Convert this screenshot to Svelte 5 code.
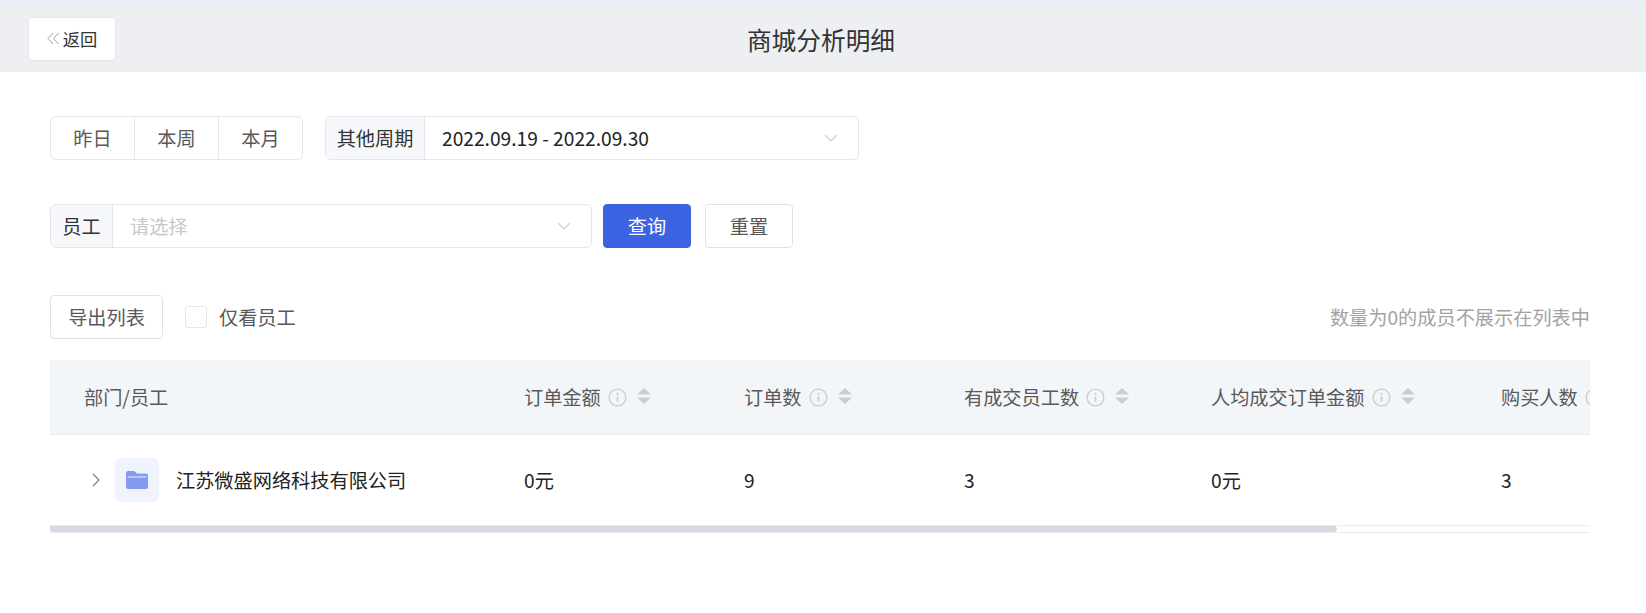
<script>
  const columns = [
    { label: '订单金额', value: '0元', width: 220 },
    { label: '订单数', value: '9', width: 220 },
    { label: '有成交员工数', value: '3', width: 247 },
    { label: '人均成交订单金额', value: '0元', width: 290 },
    { label: '购买人数', value: '3', width: 180 }
  ];
</script>

<div class="page">
  <header class="topbar">
    <button class="back">
      <svg class="back-icon" viewBox="0 0 13 13" width="13" height="13"><path d="M6 1 1 6.500l5 5.500M11.500 1l-5 5.500 5 5.500" fill="none" stroke="#a0a0a0" stroke-width="1"/></svg>
      <span>返回</span>
    </button>
    <h1>商城分析明细</h1>
  </header>

  <main class="content">
    <div class="row first">
      <div class="segments">
        <div class="seg">昨日</div>
        <div class="seg">本周</div>
        <div class="seg">本月</div>
      </div>
      <div class="field period">
        <div class="addon">其他周期</div>
        <div class="value">2022.09.19 - 2022.09.30</div>
        <svg class="chev" viewBox="0 0 14 8" width="14" height="8"><path d="M1 1l6 6 6-6" fill="none" stroke="#cfcfcf" stroke-width="1.2"/></svg>
      </div>
    </div>

    <div class="row second">
      <div class="field staff">
        <div class="addon small">员工</div>
        <div class="value placeholder">请选择</div>
        <svg class="chev" viewBox="0 0 14 8" width="14" height="8"><path d="M1 1l6 6 6-6" fill="none" stroke="#cfcfcf" stroke-width="1.2"/></svg>
      </div>
      <button class="btn primary">查询</button>
      <button class="btn reset">重置</button>
    </div>

    <div class="row third">
      <button class="btn export">导出列表</button>
      <label class="check"><span class="box"></span><span>仅看员工</span></label>
      <div class="note">数量为0的成员不展示在列表中</div>
    </div>

    <div class="table">
      <div class="inner">
        <div class="thead">
          <div class="first-col head-first">部门/员工</div>
          {#each columns as c}
            <div class="th" style="width:{c.width}px">
              <span>{c.label}</span>
              <svg class="info" viewBox="0 0 20 20" width="19" height="19"><circle cx="10" cy="10" r="8.8" fill="none" stroke="#cccccc" stroke-width="1.4"/><circle cx="10" cy="6.200" r="1.100" fill="#cccccc"/><path d="M10 9v5.500" stroke="#cccccc" stroke-width="1.700"/></svg>
              <svg class="sort" viewBox="0 0 14 16" width="14" height="16"><path d="M7 0l7 6.500H0zM7 16l7-6.500H0z" fill="#cdcdcd"/></svg>
            </div>
          {/each}
        </div>
        <div class="tbody">
          <div class="first-col body-first">
            <svg class="arrow" viewBox="0 0 8 14" width="8" height="14"><path d="M1 1l6 6-6 6" fill="none" stroke="#777" stroke-width="1.100"/></svg>
            <div class="tile">
              <svg viewBox="0 0 22 18" width="22" height="18"><path d="M2 0h6l3 2.500h9a2 2 0 0 1 2 2V16a2 2 0 0 1-2 2H2a2 2 0 0 1-2-2V2a2 2 0 0 1 2-2z" fill="#829bf0"/><path d="M1.500 6h19" stroke="#eef2fe" stroke-width="1"/></svg>
            </div>
            <span>江苏微盛网络科技有限公司</span>
          </div>
          {#each columns as c}
            <div class="td" style="width:{c.width}px">{c.value}</div>
          {/each}
        </div>
      </div>
      <div class="scroll"><div class="thumb"></div></div>
    </div>
  </main>
</div>

<style>
  :global(body) {
    margin: 0;
    background: #fff;
    overflow: hidden;
  }
  .page {
    height: 613px;
    font-family: "Noto Sans CJK SC", "Noto Sans", sans-serif;
    color: #595959;
    font-size: 19.2px;
  }
  .topbar {
    height: 67px;
    border-top: 5px solid #e9eef6;
    background: #edeff3;
    display: flex;
    align-items: center;
    position: relative;
    padding-left: 28px;
  }
  .topbar h1 {
    position: absolute;
    left: 0;
    right: 0;
    margin: 0;
    padding-right: 4px;
    text-align: center;
    font-size: 24.7px;
    font-weight: 400;
    color: #333;
  }
  button {
    font-family: inherit;
    cursor: pointer;
  }
  .back {
    position: relative;
    z-index: 1;
    width: 88px;
    height: 44px;
    background: #fff;
    border: 1px solid #e4e6ea;
    border-radius: 4px;
    display: flex;
    align-items: center;
    justify-content: center;
    gap: 3px;
    padding: 0;
    font-size: 17.300px;
    color: #333;
  }
  .content {
    padding: 44px 56px 0 50px;
  }
  .row {
    display: flex;
    align-items: center;
  }
  .first { height: 44px; gap: 22px; }
  .second { height: 44px; margin-top: 44px; }
  .third { height: 44px; margin-top: 47px; }
  .segments {
    display: flex;
    width: 253px;
    height: 44px;
    box-sizing: border-box;
    border: 1px solid #e4e6ea;
    border-radius: 6px;
  }
  .seg {
    flex: 1;
    display: flex;
    align-items: center;
    justify-content: center;
    color: #595959;
  }
  .seg + .seg { border-left: 1px solid #e4e6ea; }
  .field {
    height: 44px;
    box-sizing: border-box;
    border: 1px solid #e4e6ea;
    border-radius: 6px;
    display: flex;
    align-items: center;
    overflow: hidden;
  }
  .period { width: 534px; }
  .staff { width: 542px; }
  .addon {
    width: 98px;
    height: 100%;
    flex: none;
    background: #f6f8fc;
    border-right: 1px solid #e4e6ea;
    display: flex;
    align-items: center;
    justify-content: center;
    color: #333;
  }
  .addon.small { width: 61px; }
  .value {
    flex: 1;
    padding-left: 17px;
    color: #222;
  }
  .value.placeholder { color: #c8c8c8; }
  .chev { margin-right: 20px; }
  .btn {
    height: 44px;
    background: #fff;
    border: 1px solid #dfe1e6;
    border-radius: 4px;
    font-size: 19.2px;
    color: #595959;
    padding: 0;
  }
  .primary {
    width: 88px;
    margin-left: 11px;
    background: #3c63e2;
    border-color: #3c63e2;
    color: #fff;
  }
  .reset { width: 88px; margin-left: 14px; }
  .export { width: 113px; }
  .check {
    display: flex;
    align-items: center;
    gap: 12px;
    margin-left: 22px;
  }
  .box {
    width: 20px;
    height: 20px;
    border: 1px solid #e4e6ea;
    border-radius: 3px;
  }
  .note {
    margin-left: auto;
    color: #a3a3a3;
    white-space: nowrap;
  }
  .table {
    margin-top: 21px;
    overflow: hidden;
  }
  .inner { width: 1700px; }
  .thead {
    display: flex;
    align-items: center;
    height: 74px;
    background: #f3f6f9;
    border-bottom: 1px solid #e9ecf0;
  }
  .tbody {
    display: flex;
    align-items: center;
    height: 90px;
    color: #222;
  }
  .first-col {
    width: 474px;
    flex: none;
    box-sizing: border-box;
    display: flex;
    align-items: center;
  }
  .head-first { padding-left: 34px; }
  .body-first { padding-left: 42px; }
  .tile {
    width: 44px;
    height: 44px;
    margin-left: 15px;
    margin-right: 17px;
    border-radius: 6px;
    background: #eff3fe;
    display: flex;
    align-items: center;
    justify-content: center;
  }
  .th {
    flex: none;
    display: flex;
    align-items: center;
  }
  .info { margin-left: 7px; }
  .sort { margin-left: 10px; margin-top: -2px; }
  .td { flex: none; }
  .scroll {
    height: 8px;
    background: #fff;
    border-top: 1px solid #e9ecf0;
    border-bottom: 1px solid #e9ecf0;
    box-sizing: border-box;
  }
  .thumb {
    width: 1287px;
    height: 100%;
    background: #d6dae2;
    border-radius: 0 4px 4px 4px;
  }
</style>
